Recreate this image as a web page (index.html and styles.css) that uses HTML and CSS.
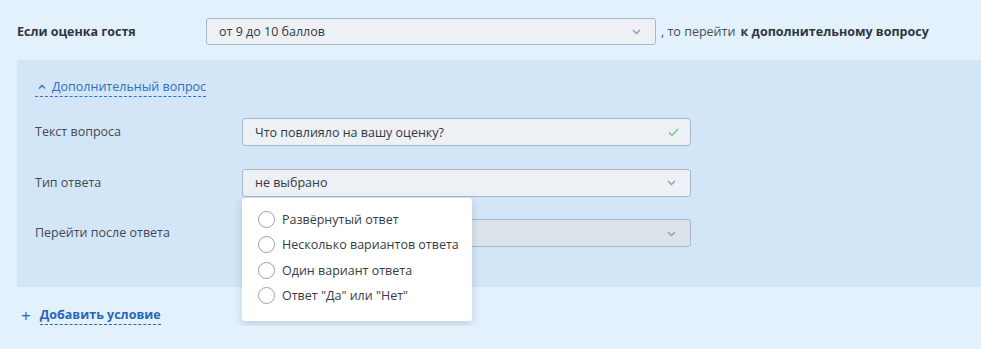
FILE: index.html
```html
<!DOCTYPE html>
<html lang="ru">
<head>
    <meta charset="UTF-8">
    <meta name="viewport" content="width=device-width, initial-scale=1.0">
    <title>Условие</title>
    <link rel="stylesheet" href="styles.css">
</head>
<body>
    <div class="condition">
        <div class="cond-row">
            <span class="cond-label">Если оценка гостя</span>
            <div class="select cond-select">
                <span>от 9 до 10 баллов</span>
                <svg class="chevron" width="9" height="6" viewBox="0 0 9 6"><path d="M1 1l3.5 3.5L8 1" fill="none" stroke="#8d9bb0" stroke-width="1.3"/></svg>
            </div>
            <span class="cond-then">, то перейти <b>к дополнительному вопросу</b></span>
        </div>
    </div>

    <div class="panel">
        <a class="toggle" href="#">
            <svg class="caret" width="8" height="6" viewBox="0 0 8 6"><path d="M1 4.5l3-3 3 3" fill="none" stroke="#2f6fc0" stroke-width="1.3"/></svg>
            <span>Дополнительный вопрос</span>
        </a>

        <div class="field">
            <span class="field-label">Текст вопроса</span>
            <div class="select">
                <span>Что повлияло на вашу оценку?</span>
                <svg class="check" width="11" height="9" viewBox="0 0 11 9"><path d="M1 4.5l3 3 6-6.5" fill="none" stroke="#6cbf7a" stroke-width="1.2"/></svg>
            </div>
        </div>

        <div class="field">
            <span class="field-label">Тип ответа</span>
            <div class="select-wrap">
                <div class="select">
                    <span>не выбрано</span>
                    <svg class="chevron" width="9" height="6" viewBox="0 0 9 6"><path d="M1 1l3.5 3.5L8 1" fill="none" stroke="#8d9bb0" stroke-width="1.3"/></svg>
                </div>
                <ul class="menu">
                    <li><span class="radio"></span>Развёрнутый ответ</li>
                    <li><span class="radio"></span>Несколько вариантов ответа</li>
                    <li><span class="radio"></span>Один вариант ответа</li>
                    <li><span class="radio"></span>Ответ "Да" или "Нет"</li>
                </ul>
            </div>
        </div>

        <div class="field">
            <span class="field-label">Перейти после ответа</span>
            <div class="select disabled">
                <span></span>
                <svg class="chevron" width="9" height="6" viewBox="0 0 9 6"><path d="M1 1l3.5 3.5L8 1" fill="none" stroke="#8d9bb0" stroke-width="1.3"/></svg>
            </div>
        </div>
    </div>

    <a class="add" href="#"><span class="plus">+</span><span class="dashed">Добавить условие</span></a>
</body>
</html>
```

FILE: styles.css
```css
body { margin: 0; background: #e3f1fc; font-family: "Open Sans", sans-serif; font-size: 12.5px; color: #363c47; }
a { text-decoration: none; }
.condition { padding: 18px 0 0 17px; }
.cond-row { display: flex; align-items: center; height: 27px; }
.cond-label { width: 189px; font-weight: bold; color: #2f3540; }
.cond-then { margin-left: 5px; color: #474d57; }
.cond-then b { color: #2f3540; margin-left: 2px; }

.select { box-sizing: border-box; display: flex; align-items: center; justify-content: space-between; width: 449px; height: 28px; padding: 0 14px 0 12px; background: #edf1f5; border: 1px solid #a8b7cb; border-radius: 3px; color: #323843; }
.cond-select { width: 450px; height: 27px; }
.select.disabled { background: #dde3eb; }
.chevron { margin-top: 1px; }
.check { margin-right: -3px; }

.panel { margin: 15px 0 0 17px; padding: 17px 0 40px 18px; background: #d3e6f7; }
.toggle { display: inline-flex; align-items: center; color: #2f6fc0; line-height: 18px; border-bottom: 1px dashed #2f6fc0; }
.caret { margin: 0 6px 0 3px; }

.field { display: flex; align-items: flex-start; margin-top: 22.5px; }
.toggle + .field { margin-top: 21px; }
.field-label { width: 207px; line-height: 28px; color: #434953; }
.select-wrap { position: relative; }

.menu { position: absolute; top: 29px; left: 0; z-index: 2; width: 230px; margin: 0; padding: 9px 0 12px 16px; box-sizing: border-box; list-style: none; background: #fff; border-radius: 3px; box-shadow: 0 3px 8px rgba(60, 80, 110, 0.22); }
.menu li { display: flex; align-items: center; height: 25.5px; color: #363c47; }
.radio { box-sizing: border-box; width: 17px; height: 17px; margin-right: 7px; border: 1px solid #93a2b8; border-radius: 50%; background: #fff; }

.add { display: inline-flex; align-items: center; margin: 19px 0 0 21px; color: #2a66b8; font-weight: bold; line-height: 18px; }
.plus { font-weight: normal; font-size: 17px; margin-right: 9px; }
.dashed { border-bottom: 1px dashed #2a66b8; }
```
